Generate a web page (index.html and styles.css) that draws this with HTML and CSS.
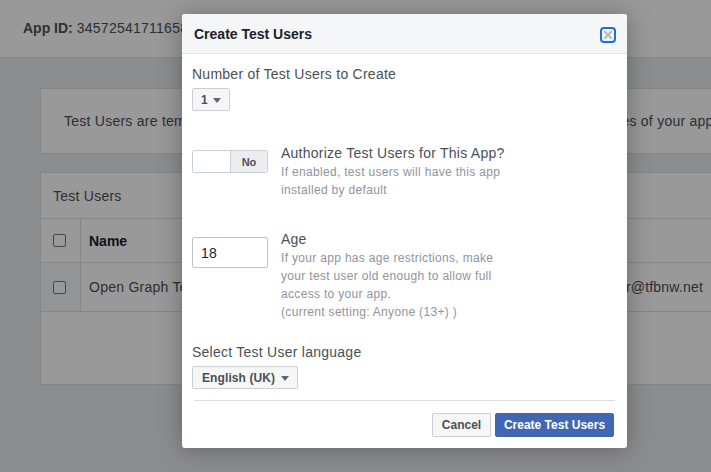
FILE: index.html
```html
<!DOCTYPE html>
<html lang="en">
<head>
<meta charset="utf-8">
<title>Create Test Users</title>
<link rel="stylesheet" href="styles.css">
</head>
<body>
<div class="page">
  <header class="topbar">
    <span class="appid-label">App ID:</span>
    <span class="appid">345725417116582</span>
  </header>
  <main class="content">
    <section class="card intro"><span class="intro-text">Test Users are temporary Facebook accounts that you can create to test various features of your app.</span></section>
    <section class="card users">
      <div class="card-head">Test Users</div>
      <div class="row head-row">
        <div class="cell check"><span class="checkbox"></span></div>
        <div class="cell name strong">Name</div>
      </div>
      <div class="row user-row">
        <div class="cell check"><span class="checkbox"></span></div>
        <div class="cell name">Open Graph Test User</div>
        <div class="cell email">open_ygcwxwb_user@tfbnw.net</div>
      </div>
    </section>
  </main>
</div>
<div class="overlay"></div>
<div class="modal">
  <div class="modal-head">
    <span class="modal-title">Create Test Users</span>
    <span class="close" aria-label="Close">
      <svg width="16" height="16" viewBox="0 0 16 16">
        <rect x="1" y="1" width="14" height="14" rx="3" fill="#f5f6f7" stroke="#1a6fe0" stroke-width="2"/>
        <path d="M5 5 L11 11 M11 5 L5 11" stroke="#b4b8be" stroke-width="2" stroke-linecap="square"/>
      </svg>
    </span>
  </div>
  <div class="modal-body">
    <div class="field">
      <div class="label">Number of Test Users to Create</div>
      <div class="select"><span>1</span><i class="caret"></i></div>
    </div>
    <div class="option option-toggle">
      <div class="control">
        <div class="toggle"><span class="toggle-off"></span><span class="toggle-no">No</span></div>
      </div>
      <div class="option-text">
        <div class="option-title">Authorize Test Users for This App?</div>
        <div class="option-desc">If enabled, test users will have this app<br>installed by default</div>
      </div>
    </div>
    <div class="option option-age">
      <div class="control">
        <div class="input">18</div>
      </div>
      <div class="option-text">
        <div class="option-title">Age</div>
        <div class="option-desc">If your app has age restrictions, make<br>your test user old enough to allow full<br>access to your app.<br>(current setting: Anyone (13+) )</div>
      </div>
    </div>
    <div class="field field-lang">
      <div class="label">Select Test User language</div>
      <div class="select select-lang"><span>English (UK)</span><i class="caret"></i></div>
    </div>
  </div>
  <div class="modal-foot">
    <span class="btn btn-cancel">Cancel</span>
    <span class="btn btn-primary">Create Test Users</span>
  </div>
</div>
</body>
</html>
```
FILE: styles.css
```css
* { box-sizing: border-box; }
html, body { margin: 0; padding: 0; }
body {
  width: 711px;
  height: 472px;
  overflow: hidden;
  position: relative;
  background: #e9ebee;
  font-family: "Liberation Sans", Arial, sans-serif;
  font-size: 14px;
  letter-spacing: 0.25px;
  color: #4b4f56;
}
.topbar {
  height: 58px;
  background: #fff;
  border-bottom: 1px solid #dddfe2;
  display: flex;
  align-items: center;
  gap: 4px;
  padding-left: 23px;
  padding-bottom: 2px;
  white-space: nowrap;
  overflow: hidden;
}
.appid-label { font-weight: bold; letter-spacing: 0; }
.content {
  padding: 30px 0 0 40px;
}
.card {
  background: #fff;
  border: 1px solid #dddfe2;
  border-right: none;
  overflow: hidden;
}
.intro {
  height: 66px;
  display: flex;
  align-items: center;
  padding-left: 23px;
  white-space: nowrap;
}
.intro-text { flex: none; }
.users {
  margin-top: 18px;
  height: 213px;
}
.card-head {
  height: 46px;
  border-bottom: 1px solid #dddfe2;
  display: flex;
  align-items: center;
  padding-left: 12px;
}
.row {
  display: flex;
  border-bottom: 1px solid #dddfe2;
}
.head-row { height: 44px; }
.user-row { height: 49px; }
.cell {
  display: flex;
  align-items: center;
}
.check {
  width: 40px;
  flex: none;
  justify-content: center;
  border-right: 1px solid #dddfe2;
  padding-right: 2px;
}
.user-row .check { background: #f6f7f9; }
.checkbox {
  width: 13px;
  height: 13px;
  border: 1px solid #6f747c;
  border-radius: 2px;
  background: #fff;
}
.name {
  width: 440px;
  flex: none;
  padding-left: 8px;
  white-space: nowrap;
}
.strong { font-weight: bold; color: #1d2129; letter-spacing: 0; }
.email {
  width: 182px;
  flex: none;
  justify-content: flex-end;
  white-space: nowrap;
  letter-spacing: 0.2px;
}

.overlay {
  position: absolute;
  inset: 0;
  background: rgba(0, 0, 0, 0.4);
}

.modal {
  position: absolute;
  left: 182px;
  top: 14px;
  width: 445px;
  height: 434px;
  background: #fff;
  border-radius: 3px;
  box-shadow: 0 2px 26px rgba(0, 0, 0, 0.3);
  display: flex;
  flex-direction: column;
}
.modal-head {
  height: 40px;
  background: #f5f6f7;
  border-bottom: 1px solid #e5e5e5;
  border-radius: 3px 3px 0 0;
  display: flex;
  align-items: center;
  justify-content: space-between;
  padding: 0 11px 0 12px;
}
.modal-title {
  font-weight: bold;
  font-size: 14px;
  letter-spacing: 0;
  color: #1d2129;
}
.close { display: flex; margin-top: 2px; }
.modal-body {
  padding: 11px 12px 0 10px;
}
.label {
  line-height: 18px;
  color: #4b4f56;
}
.select {
  margin-top: 5px;
  height: 23px;
  display: inline-flex;
  align-items: center;
  gap: 5px;
  padding: 0 8px;
  background: #f5f6f7;
  border: 1px solid #ccd0d5;
  border-radius: 2px;
  font-size: 12px;
  font-weight: bold;
  letter-spacing: 0;
  color: #4b4f56;
}
.select-lang {
  padding-left: 9px;
  gap: 6px;
  letter-spacing: 0.1px;
}
.caret {
  width: 0;
  height: 0;
  border-left: 4.5px solid transparent;
  border-right: 4.5px solid transparent;
  border-top: 5px solid #606770;
  margin-top: 1px;
}
.option {
  display: flex;
  gap: 13px;
}
.option-toggle { margin-top: 32px; }
.option-age { margin-top: 30px; }
.control { width: 76px; flex: none; }
.option-toggle .control { padding-top: 7px; }
.option-age .control { padding-top: 8px; }
.option-title {
  line-height: 20px;
  color: #4b4f56;
}
.option-desc {
  font-size: 12px;
  line-height: 18px;
  letter-spacing: 0.32px;
  color: #90949c;
}
.toggle {
  display: flex;
  height: 23px;
  border: 1px solid #ccd0d5;
  border-radius: 2px;
  overflow: hidden;
}
.toggle-off { flex: 1; background: #fff; }
.toggle-no {
  width: 37px;
  background: #ebedf0;
  border-left: 1px solid #ccd0d5;
  font-size: 11px;
  font-weight: bold;
  letter-spacing: 0;
  color: #4b4f56;
  display: flex;
  align-items: center;
  justify-content: center;
}
.input {
  height: 31px;
  border: 1px solid #bec3c9;
  border-radius: 2px;
  padding-left: 8px;
  display: flex;
  align-items: center;
  color: #1d2129;
  font-size: 14px;
}
.field-lang { margin-top: 22px; }
.modal-foot {
  margin: 11px 12px 0 12px;
  border-top: 1px solid #dadde1;
  padding: 12px 1px 0 0;
  display: flex;
  justify-content: flex-end;
  gap: 4px;
}
.btn {
  height: 24px;
  display: flex;
  align-items: center;
  justify-content: center;
  font-size: 12px;
  font-weight: bold;
  letter-spacing: 0;
  border-radius: 2px;
  border: 1px solid;
}
.btn-cancel {
  width: 59px;
  background: #f5f6f7;
  border-color: #ccd0d5;
  color: #4b4f56;
}
.btn-primary {
  width: 119px;
  background: #4267b2;
  border-color: #4267b2;
  color: #fff;
}
```
